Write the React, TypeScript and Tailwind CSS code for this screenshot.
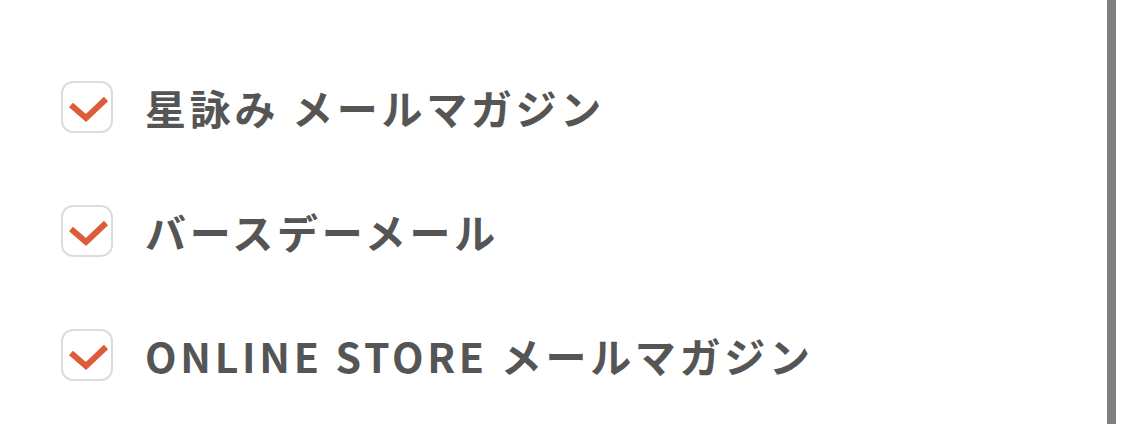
const items = ["星詠み メールマガジン", "バースデーメール", "ONLINE STORE メールマガジン"];

function Check() {
  return (
    <span className="flex h-[52px] w-[52px] shrink-0 items-center justify-center rounded-[12px] border-2 border-[#dcdcdc] bg-white">
      <svg width="52" height="52" viewBox="0 0 52 52" className="-m-[2px]">
        <path d="M10 24 L25 37 L45 18" fill="none" stroke="#dc5b38" strokeWidth="6" strokeLinecap="butt" strokeLinejoin="miter" />
      </svg>
    </span>
  );
}

export default function App() {
  return (
    <div className="flex h-[424px] w-[1125px] bg-white" style={{ fontFamily: '"Noto Sans CJK JP", "Noto Sans", sans-serif' }}>
      <ul className="flex flex-1 flex-col gap-[72px] pl-[61px] pt-[81px]">
        {items.map((t) => (
          <li key={t} className="flex items-center gap-[32px]">
            <Check />
            <span className="text-[41px] font-bold leading-none tracking-[0.09em] text-[#555555]">{t}</span>
          </li>
        ))}
      </ul>
      <div className="mr-[9px] h-full w-[9px] bg-[#808080]" />
    </div>
  );
}
